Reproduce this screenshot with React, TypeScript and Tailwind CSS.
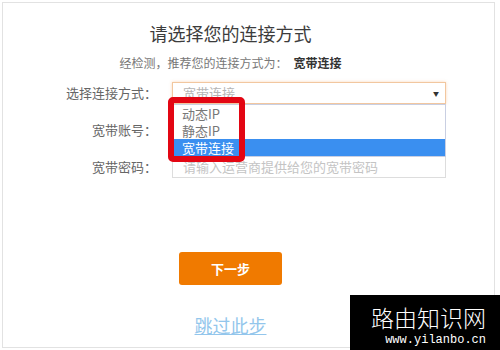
import { useState } from 'react';

const cjk = '"Noto Sans CJK SC", "Noto Sans", sans-serif';

const options = ['动态IP', '静态IP', '宽带连接'];

export default function App() {
  const [selected] = useState('宽带连接');

  return (
    <div className="relative w-[500px] h-[350px] bg-white overflow-hidden" style={{ fontFamily: cjk }}>
      {/* Card */}
      <div className="ml-[2px] mt-[2px] w-[493px] h-[346px] border border-[#e2e2e2] flex flex-col items-center pr-[36px]">
        <h1 className="mt-[18px] text-[18px] leading-[24px] text-[#3c3c3c]">请选择您的连接方式</h1>
        <p className="mt-[10px] text-[12px] leading-[16px] text-[#777]">
          经检测，推荐您的连接方式为：<span className="ml-[6px] font-bold text-[#333]">宽带连接</span>
        </p>

        {/* Form */}
        <div className="self-start ml-[57px] mt-[11px] flex flex-col gap-[15px]">
          <div className="flex items-center h-[22px]">
            <label className="w-[97px] text-right text-[13px] text-[#666]">选择连接方式：</label>
            <div className="relative ml-[15px] w-[274px] h-[22px] border border-[#f2c79f] shadow-[0_0_3px_rgba(240,150,60,0.35)] flex items-center pl-[10px] pr-[6px]">
              <span className="text-[13px] text-[#b5b5b5] flex-1">{selected}</span>
              <span className="text-[6px] text-[#333]">▼</span>

              {/* Dropdown list */}
              <div className="absolute left-[-1px] top-[21px] w-[274px] bg-white border border-[#c9cfe2] z-10">
                {options.map(opt => (
                  <div
                    key={opt}
                    className={
                      opt === selected
                        ? 'h-[17px] leading-[17px] pl-[9px] text-[13px] bg-[#3a8ff0] text-white'
                        : 'h-[17px] leading-[17px] pl-[9px] text-[13px] text-[#777]'
                    }
                  >
                    {opt}
                  </div>
                ))}
              </div>

              {/* Red highlight annotation */}
              <div className="absolute left-[-5px] top-[14px] w-[77px] h-[65px] border-[6px] border-[#e30613] rounded-[5px] z-20" />
            </div>
          </div>

          <div className="flex items-center h-[22px]">
            <label className="w-[97px] text-right text-[13px] text-[#666]">宽带账号：</label>
            <div className="ml-[15px] w-[274px] h-[22px] border border-[#ddd]" />
          </div>

          <div className="flex items-center h-[22px]">
            <label className="w-[97px] text-right text-[13px] text-[#666]">宽带密码：</label>
            <div className="ml-[15px] w-[274px] h-[22px] border border-[#ddd] flex items-center px-[10px]">
              <span className="text-[13px] text-[#c4c4c4]">请输入运营商提供给您的宽带密码</span>
            </div>
          </div>
        </div>

        <button className="mt-[74px] w-[103px] h-[33px] rounded-[3px] bg-[#f07a00] text-white text-[13px] font-bold">
          下一步
        </button>

        <a className="mt-[29px] text-[18px] leading-[22px] text-[#93c6ec] underline">跳过此步</a>
      </div>

      {/* Watermark */}
      <div className="absolute right-0 bottom-0 w-[150px] h-[55px] bg-black flex flex-col items-end pr-[14px]">
        <span className="mt-[10px] text-[23px] leading-[24px] font-light text-white">路由知识网</span>
        <span className="mt-[4px] text-[12px] leading-[14px] text-white" style={{ fontFamily: '"Liberation Mono", monospace' }}>
          www.yilanbo.cn
        </span>
      </div>
    </div>
  );
}
